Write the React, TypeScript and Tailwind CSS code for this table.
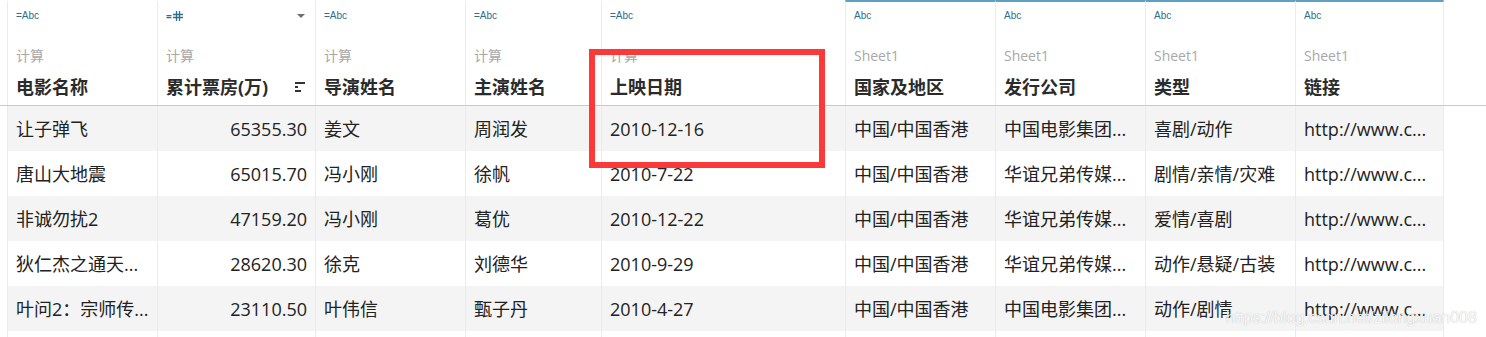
import React from "react";

type Col = {
  w: string;
  src: "calc" | "sheet";
  kind: "abc" | "num";
  title: string;
  align?: "right";
};

const cols: Col[] = [
  { w: "w-[150px]", src: "calc", kind: "abc", title: "电影名称" },
  { w: "w-[158px]", src: "calc", kind: "num", title: "累计票房(万)", align: "right" },
  { w: "w-[150px]", src: "calc", kind: "abc", title: "导演姓名" },
  { w: "w-[136px]", src: "calc", kind: "abc", title: "主演姓名" },
  { w: "w-[244px]", src: "calc", kind: "abc", title: "上映日期" },
  { w: "w-[150px]", src: "sheet", kind: "abc", title: "国家及地区" },
  { w: "w-[150px]", src: "sheet", kind: "abc", title: "发行公司" },
  { w: "w-[150px]", src: "sheet", kind: "abc", title: "类型" },
  { w: "w-[149px]", src: "sheet", kind: "abc", title: "链接" },
];

const rows: string[][] = [
  ["让子弹飞", "65355.30", "姜文", "周润发", "2010-12-16", "中国/中国香港", "中国电影集团...", "喜剧/动作", "http://www.c..."],
  ["唐山大地震", "65015.70", "冯小刚", "徐帆", "2010-7-22", "中国/中国香港", "华谊兄弟传媒...", "剧情/亲情/灾难", "http://www.c..."],
  ["非诚勿扰2", "47159.20", "冯小刚", "葛优", "2010-12-22", "中国/中国香港", "华谊兄弟传媒...", "爱情/喜剧", "http://www.c..."],
  ["狄仁杰之通天...", "28620.30", "徐克", "刘德华", "2010-9-29", "中国/中国香港", "华谊兄弟传媒...", "动作/悬疑/古装", "http://www.c..."],
  ["叶问2：宗师传...", "23110.50", "叶伟信", "甄子丹", "2010-4-27", "中国/中国香港", "中国电影集团...", "动作/剧情", "http://www.c..."],
];

function TypeIcon({ col }: { col: Col }) {
  if (col.kind === "num") {
    return (
      <span className="flex items-center gap-[1px] text-[#2f6e8f]">
        <span className="text-[10px] leading-none font-bold">=</span>
        <svg width="10" height="10" viewBox="0 0 10 10">
          <path d="M3.5 0V10M6.5 0V10M0 3.5H10M0 6.5H10" stroke="#2f6e8f" strokeWidth="1.3" />
        </svg>
      </span>
    );
  }
  return (
    <span className="text-[10px] leading-none text-[#2f6e8f] font-['Liberation_Sans',sans-serif]">
      {col.src === "calc" ? "=Abc" : "Abc"}
    </span>
  );
}

function SortIcon() {
  return (
    <span className="flex flex-col gap-[2px]">
      <span className="block h-[2px] w-[10px] bg-[#333]" />
      <span className="block h-[2px] w-[3px] bg-[#333]" />
      <span className="block h-[2px] w-[6px] bg-[#333]" />
    </span>
  );
}

export default function App() {
  return (
    <div className="relative w-[1486px] h-[337px] overflow-hidden bg-white font-['Open_Sans','Noto_Sans_CJK_SC',sans-serif] text-[#222]">
      {/* 헤더 */}
      <div className="flex h-[106px] border-b border-[#c9c9c9]">
        <div className="w-[7px] shrink-0" />
        {cols.map((c, i) => (
          <div
            key={i}
            className={`${c.w} shrink-0 border-l border-[#ebebeb] ${i === cols.length - 1 ? "border-r" : ""} ${
              c.src === "sheet" ? "border-t-2 border-t-[#5f9fc3]" : "border-t-2 border-t-white"
            } flex flex-col pl-[8px] pr-[10px]`}
          >
            <div className="mt-[9px] h-[10px] flex items-center justify-between">
              <TypeIcon col={c} />
              {c.kind === "num" && (
                <svg width="8" height="4" viewBox="0 0 8 4">
                  <path d="M0 0H8L4 4Z" fill="#6b6f76" />
                </svg>
              )}
            </div>
            <div className="mt-[26px] text-[14px] leading-[18px] text-[#a8a8a8]">
              {c.src === "calc" ? "计算" : "Sheet1"}
            </div>
            <div className="mt-[10px] flex items-center justify-between">
              <span className="text-[18px] leading-[24px] font-bold text-[#2b2b2b]">{c.title}</span>
              {c.kind === "num" && <SortIcon />}
            </div>
          </div>
        ))}
      </div>

      {/* 데이터 행 */}
      {[...rows, null].map((r, ri) => (
        <div key={ri} className="flex h-[45px]">
          <div className="w-[7px] shrink-0" />
          {cols.map((c, ci) => (
            <div
              key={ci}
              className={`${c.w} shrink-0 border-l border-[#ebebeb] ${ci === cols.length - 1 ? "border-r" : ""} ${
                ri % 2 === 0 && r ? "bg-[#f4f4f4]" : "bg-white"
              } flex items-center pl-[8px] pr-[8px] ${c.align === "right" ? "justify-end" : ""}`}
            >
              {r && <span className="text-[18px] leading-none whitespace-nowrap">{r[ci]}</span>}
            </div>
          ))}
        </div>
      ))}

      {/* 강조 박스 */}
      <div className="absolute left-[589px] top-[49px] w-[236px] h-[119px] border-[6px] border-[#fb3939]" />

      {/* 워터마크 */}
      <div className="absolute left-[1226px] top-[308px] text-[16px] leading-[20px] text-white/90 font-['Liberation_Sans',sans-serif] [text-shadow:0_0_1px_rgba(0,0,0,0.3)]">
        https://blog.csdn.net/zilongxuan008
      </div>
    </div>
  );
}
